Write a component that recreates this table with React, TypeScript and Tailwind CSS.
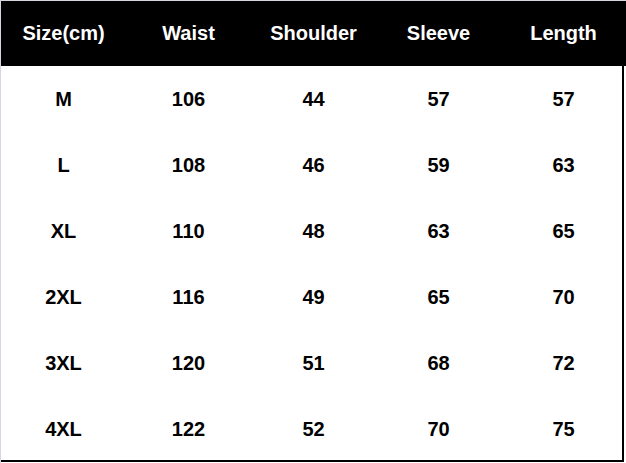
import React from 'react';

const headers = ['Size(cm)', 'Waist', 'Shoulder', 'Sleeve', 'Length'];

const rows: string[][] = [
  ['M', '106', '44', '57', '57'],
  ['L', '108', '46', '59', '63'],
  ['XL', '110', '48', '63', '65'],
  ['2XL', '116', '49', '65', '70'],
  ['3XL', '120', '51', '68', '72'],
  ['4XL', '122', '52', '70', '75'],
];

const App: React.FC = () => {
  return (
    <div
      className="w-[626px] h-[463px] bg-white border-t border-l border-[#d6d6e2] overflow-hidden font-bold text-[20px]"
      style={{ fontFamily: '"Liberation Sans", Arial, sans-serif' }}
    >
      <div className="h-[65px] pb-px bg-black text-white grid grid-cols-[125px_125px_125px_125px_125px] items-center">
        {headers.map((h) => (
          <div key={h} className="text-center">{h}</div>
        ))}
      </div>
      <div className="w-[623px] h-[396px] shadow-[inset_-2px_-2px_0_0_#000] flex flex-col text-black">
        {rows.map((row) => (
          <div key={row[0]} className="h-[66px] shrink-0 grid grid-cols-[125px_125px_125px_125px_125px] items-center">
            {row.map((cell, i) => (
              <div key={i} className="text-center">{cell}</div>
            ))}
          </div>
        ))}
      </div>
    </div>
  );
};

export default App;
